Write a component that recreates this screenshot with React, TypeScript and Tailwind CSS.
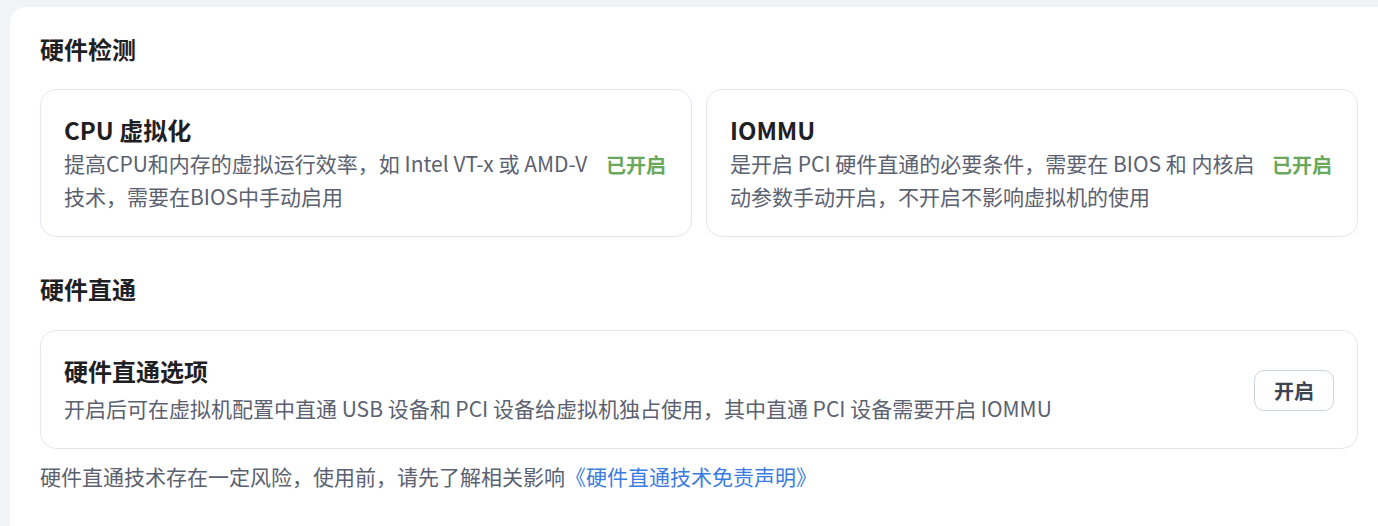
import React from "react";

const font = { fontFamily: '"Noto Sans CJK SC", "Noto Sans", sans-serif' };

interface CheckItem {
  title: string;
  lines: string[];
  status: string;
}

const checks: CheckItem[] = [
  {
    title: "CPU 虚拟化",
    lines: ["提高CPU和内存的虚拟运行效率，如 Intel VT-x 或 AMD-V", "技术，需要在BIOS中手动启用"],
    status: "已开启",
  },
  {
    title: "IOMMU",
    lines: ["是开启 PCI 硬件直通的必要条件，需要在 BIOS 和 内核启", "动参数手动开启，不开启不影响虚拟机的使用"],
    status: "已开启",
  },
];

function CheckCard({ item }: { item: CheckItem }) {
  return (
    <div className="flex items-center justify-between border border-[#e4e7ee] rounded-2xl pl-[23px] pr-[25px] pt-[25px] pb-[23px]">
      <div>
        <h3 className="text-[24px] leading-[30px] font-semibold text-[#1f2023]">{item.title}</h3>
        <p className="mt-[2px] text-[21px] leading-[33px] text-[#5b6170]">
          {item.lines.map((l, i) => (
            <span key={i} className="block whitespace-nowrap">
              {l}
            </span>
          ))}
        </p>
      </div>
      <span className="text-[20px] font-bold text-[#6aa85b] shrink-0 mt-[2px]">{item.status}</span>
    </div>
  );
}

export default function App() {
  return (
    <div className="min-h-[526px] bg-[#f2f3f7] pt-[7px] pl-[10px]" style={font}>
      <div className="bg-white rounded-tl-2xl min-h-[519px] pl-[30px] pr-[20px] pt-[26px]">
        <h2 className="text-[24px] leading-[32px] font-bold text-[#1f2023]">硬件检测</h2>
        <div className="mt-[24px] grid grid-cols-2 gap-[14px]">
          {checks.map((c) => (
            <CheckCard key={c.title} item={c} />
          ))}
        </div>

        <h2 className="mt-[36px] text-[24px] leading-[32px] font-bold text-[#1f2023]">硬件直通</h2>
        <div className="mt-[25px] flex items-center justify-between border border-[#e4e7ee] rounded-2xl pl-[23px] pr-[23px] pt-[25px] pb-[23px]">
          <div>
            <h3 className="text-[24px] leading-[30px] font-semibold text-[#1f2023]">硬件直通选项</h3>
            <p className="mt-[6px] text-[21px] leading-[33px] text-[#5b6170]">
              开启后可在虚拟机配置中直通 USB 设备和 PCI 设备给虚拟机独占使用，其中直通 PCI 设备需要开启 IOMMU
            </p>
          </div>
          <button className="w-[80px] h-[41px] rounded-[10px] border border-[#cfd4dc] bg-white text-[20px] font-bold text-[#3d4350]">
            开启
          </button>
        </div>

        <p className="mt-[11px] text-[21px] leading-[33px] text-[#5b6170]">
          硬件直通技术存在一定风险，使用前，请先了解相关影响
          <a href="#" className="text-[#3b7ce0]">
            《硬件直通技术免责声明》
          </a>
        </p>
      </div>
    </div>
  );
}
